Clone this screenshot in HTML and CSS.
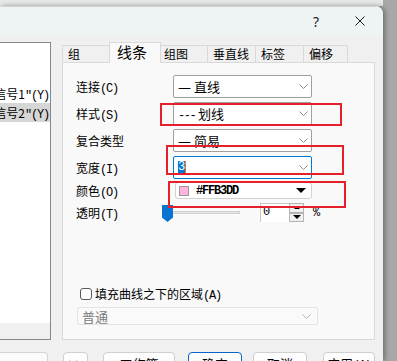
FILE: index.html
```html
<!DOCTYPE html>
<html lang="zh-CN">
<head>
<meta charset="utf-8">
<title>线条</title>
<link rel="stylesheet" href="styles.css">
</head>
<body>
<div class="dialog">
  <div class="titlebar">
    <span class="help">?</span>
    <svg class="close" width="10" height="10" viewBox="0 0 10 10"><path d="M0.5 0.5 L9.5 9.5 M9.5 0.5 L0.5 9.5" stroke="#1f1f1f" stroke-width="1" fill="none"/></svg>
  </div>
  <div class="content">
    <div class="main">
      <div class="list">
        <div class="items">
          <div class="item"><span>"信号1<span class="k">"(Y)</span></span></div>
          <div class="item sel"><span>"信号2<span class="k">"(Y)</span></span></div>
        </div>
        <div class="hscroll"></div>
      </div>
      <div class="tabs">
        <div class="tabstrip">
          <div class="tab t1">组</div>
          <div class="tab sel">线条</div>
          <div class="tab t3">组图</div>
          <div class="tab t4">垂直线</div>
          <div class="tab t5">标签</div>
          <div class="tab t6">偏移</div>
        </div>
        <div class="panel">
          <div class="row">
            <span class="label">连接<span class="k">(C)</span></span>
            <div class="combo"><span class="val"><span class="dash">—</span> 直线</span><svg class="chev" width="9" height="5" viewBox="0 0 9 5"><path d="M0.5 0.5 L4.5 4.5 L8.5 0.5" fill="none" stroke="#8c8c8c"/></svg></div>
          </div>
          <div class="row">
            <span class="label">样式<span class="k">(S)</span></span>
            <div class="combo"><span class="val"><span class="dashes">---</span> 划线</span><svg class="chev" width="9" height="5" viewBox="0 0 9 5"><path d="M0.5 0.5 L4.5 4.5 L8.5 0.5" fill="none" stroke="#8c8c8c"/></svg></div>
          </div>
          <div class="row">
            <span class="label">复合类型</span>
            <div class="combo"><span class="val"><span class="dash">—</span> 简易</span><svg class="chev" width="9" height="5" viewBox="0 0 9 5"><path d="M0.5 0.5 L4.5 4.5 L8.5 0.5" fill="none" stroke="#8c8c8c"/></svg></div>
          </div>
          <div class="row row-width">
            <span class="label">宽度<span class="k">(I)</span></span>
            <div class="combo focus"><span class="selected-text">3</span><span class="caret"></span><svg class="chev" width="9" height="5" viewBox="0 0 9 5"><path d="M0.5 0.5 L4.5 4.5 L8.5 0.5" fill="none" stroke="#8c8c8c"/></svg></div>
          </div>
          <div class="row row-color">
            <span class="label">颜色<span class="k">(O)</span></span>
            <div class="colorbox"><span class="swatch"></span><span class="hex">#FFB3DD</span><span class="tri"></span></div>
          </div>
          <div class="row row-slider">
            <span class="label label-short">透明<span class="k">(T)</span></span>
            <div class="slider"><span class="track"></span><span class="thumb"></span></div>
            <div class="spin-input">0</div>
            <div class="spin-btns"><span class="sb up"><span class="up-tri"></span></span><span class="sb down"><span class="down-tri"></span></span></div>
            <span class="pct">%</span>
          </div>
          <div class="check-row">
            <span class="checkbox"></span>
            <span class="check-label">填充曲线之下的区域<span class="k">(A)</span></span>
          </div>
          <div class="combo disabled"><span class="val">普通</span><svg class="chev" width="9" height="5" viewBox="0 0 9 5"><path d="M0.5 0.5 L4.5 4.5 L8.5 0.5" fill="none" stroke="#b5b5b5"/></svg></div>

          <div class="mark m1"></div>
          <div class="mark m2"></div>
          <div class="mark m3"></div>
        </div>
      </div>
    </div>
    <div class="buttons">
      <div class="leftbox"></div>
      <div class="btn b1">&gt;&gt;</div>
      <div class="btn b2">工作簿</div>
      <div class="btn b3 default">确定</div>
      <div class="btn b4">取消</div>
      <div class="btn b5">应用<span class="k">(A)</span></div>
    </div>
  </div>
</div>
</body>
</html>
```
FILE: styles.css
```css
html, body {
  margin: 0;
  padding: 0;
}
body {
  width: 397px;
  height: 361px;
  overflow: hidden;
  background:
    linear-gradient(to right, #e6e8e8 383px, transparent 383px) top left / 100% 6px no-repeat,
    #a8a8a8;
  font-family: "Noto Sans CJK SC", sans-serif;
  color: #000;
}
.dialog {
  width: 383px;
  height: 355px;
  margin-top: 6px;
  background: #f0f0f0;
  border-top-right-radius: 8px;
  box-shadow: 2px 0 5px rgba(0, 0, 0, 0.35);
  overflow: hidden;
}
.titlebar {
  height: 28px;
  border-top: 1px solid #cfd3d3;
  background: #eef4f3;
  display: flex;
  align-items: center;
  justify-content: flex-end;
}
.help {
  font-family: "Noto Sans", sans-serif;
  font-size: 14px;
  color: #222;
  margin-right: 36px;
}
.close {
  margin-right: 18px;
}
.content {
  padding-top: 7px;
}
.main {
  display: flex;
  height: 298px;
}
.k {
  font-family: "Liberation Mono", monospace;
  font-size: 12px;
  letter-spacing: -1.2px;
}
.list {
  width: 51px;
  box-sizing: border-box;
  background: #fff;
  border-top: 1px solid #828790;
  border-right: 1px solid #828790;
  border-bottom: 1px solid #828790;
  display: flex;
  flex-direction: column;
}
.items {
  padding-top: 41px;
}
.item {
  height: 19px;
  display: flex;
  justify-content: flex-end;
  align-items: center;
  white-space: nowrap;
  overflow: hidden;
  font-size: 12px;
  padding-right: 1px;
}
.item.sel {
  background: #d6d6d6;
}
.hscroll {
  margin-top: auto;
  height: 16px;
  background: #f0f0f0;
}
.tabs {
  margin-left: 11px;
  width: 313px;
  display: flex;
  flex-direction: column;
}
.tabstrip {
  height: 20px;
  display: flex;
  align-items: flex-end;
  position: relative;
  z-index: 1;
}
.tab {
  height: 17px;
  box-sizing: border-box;
  border-top: 1px solid #d9d9d9;
  border-left: 1px solid #d9d9d9;
  background: #f0f0f0;
  font-size: 12px;
  line-height: 15px;
  padding-left: 5px;
}
.t1 { width: 49px; }
.tab.sel {
  width: 52px;
  height: 21px;
  margin: 0 -2px -1px -2px;
  background: #f9f9f9;
  border-right: 1px solid #d9d9d9;
  font-size: 15px;
  line-height: 18px;
  padding-left: 7px;
  position: relative;
  z-index: 2;
}
.t3 { width: 48px; padding-left: 4px; }
.t4 { width: 48px; }
.t5 { width: 48px; }
.t6 { width: 45px; border-right: 1px solid #d9d9d9; }
.panel {
  flex: 1;
  border: 1px solid #d9d9d9;
  background: #f9f9f9;
  position: relative;
  padding: 12px 0 0 13px;
}
.row {
  display: flex;
  align-items: center;
  height: 23px;
  margin-bottom: 4px;
}
.row-width {
  margin-bottom: 3px;
}
.label {
  width: 97px;
  font-size: 12px;
  flex: none;
}
.label-short {
  width: 86px;
}
.combo {
  width: 139px;
  height: 23px;
  box-sizing: border-box;
  border: 1px solid #a0a0a0;
  border-radius: 2px;
  background: #fff;
  display: flex;
  align-items: center;
  padding: 0 3px 0 4px;
  font-size: 13px;
}
.combo .chev {
  margin-left: auto;
}
.dash {
  font-family: "DejaVu Sans", sans-serif;
  font-size: 13px;
}
.dashes {
  font-family: "Liberation Mono", monospace;
  font-size: 12px;
  letter-spacing: -1.5px;
}
.combo.focus {
  border-color: #0078d7;
}
.selected-text {
  font-family: "Liberation Mono", monospace;
  font-size: 12px;
  background: #0078d7;
  color: #fff;
  width: 7px;
  height: 13px;
  line-height: 13px;
  text-align: center;
}
.caret {
  width: 1px;
  height: 13px;
  background: #e07a1f;
}
.row-color {
  height: 17px;
  margin-bottom: 4px;
}
.colorbox {
  width: 137px;
  height: 17px;
  margin-left: 2px;
  box-sizing: border-box;
  border: 1px solid #d2d2d2;
  border-radius: 3px;
  background: #fff;
  display: flex;
  align-items: center;
  padding-left: 3px;
}
.swatch {
  width: 10px;
  height: 10px;
  box-sizing: border-box;
  border: 1px solid #9a9a9a;
  background: #ffb3dd;
}
.hex {
  margin-left: 7px;
  font-family: "Liberation Mono", monospace;
  font-size: 12px;
  letter-spacing: -1.2px;
  font-weight: bold;
}
.tri {
  margin-left: auto;
  margin-right: 5px;
  width: 0;
  height: 0;
  border-left: 5px solid transparent;
  border-right: 5px solid transparent;
  border-top: 5px solid #000;
}
.row-slider {
  height: 19px;
  margin-bottom: 0;
}
.slider {
  width: 78px;
  height: 19px;
  position: relative;
  flex: none;
}
.track {
  position: absolute;
  left: 5px;
  top: 8px;
  width: 73px;
  height: 3px;
  box-sizing: border-box;
  background: #e6e6e6;
  border: 1px solid #d0d0d0;
}
.thumb {
  position: absolute;
  left: 0;
  top: 2px;
  width: 11px;
  height: 17px;
  background: #0a72d0;
  clip-path: polygon(0 0, 100% 0, 100% 74%, 50% 100%, 0 74%);
}
.spin-input {
  margin-left: 20px;
  width: 29px;
  height: 19px;
  box-sizing: border-box;
  background: #fff;
  border-top: 1px solid #c8c8c8;
  border-left: 1px solid #c8c8c8;
  font-family: "Liberation Mono", monospace;
  font-size: 12px;
  line-height: 17px;
  padding-left: 2px;
}
.spin-btns {
  width: 15px;
  height: 19px;
  display: flex;
  flex-direction: column;
}
.sb {
  flex: 1;
  box-sizing: border-box;
  border: 1px solid #b4b4b4;
  background: #f0f0f0;
  display: flex;
  align-items: center;
  justify-content: center;
}
.up-tri {
  width: 0;
  height: 0;
  border-left: 3px solid transparent;
  border-right: 3px solid transparent;
  border-bottom: 3px solid #000;
}
.down-tri {
  width: 0;
  height: 0;
  border-left: 4px solid transparent;
  border-right: 4px solid transparent;
  border-top: 4px solid #000;
}
.pct {
  margin-left: 9px;
  font-family: "Liberation Mono", monospace;
  font-size: 12px;
}
.check-row {
  margin-top: 66px;
  height: 12px;
  display: flex;
  align-items: center;
}
.checkbox {
  width: 12px;
  height: 12px;
  margin-left: 4px;
  box-sizing: border-box;
  border: 1px solid #5a5a5a;
  border-radius: 3px;
  background: #fff;
}
.check-label {
  margin-left: 3px;
  font-size: 12px;
}
.combo.disabled {
  margin-top: 7px;
  margin-left: 1px;
  width: 241px;
  height: 18px;
  border-color: #e3e3e3;
  background: #fafafa;
  color: #7a7a7a;
  padding-right: 6px;
}
.mark {
  position: absolute;
  box-sizing: border-box;
  border: 2px solid #e5202b;
}
.m1 { left: 97px; top: 40px; width: 182px; height: 23px; }
.m2 { left: 103px; top: 82px; width: 178px; height: 30px; }
.m3 { left: 105px; top: 118px; width: 178px; height: 27px; }
.buttons {
  margin-top: 12px;
  display: flex;
  height: 24px;
}
.leftbox {
  width: 48px;
  box-sizing: border-box;
  border: 1px solid #d4d4d4;
  border-left: none;
  border-radius: 0 4px 0 0;
  background: #fbfbfb;
}
.btn {
  box-sizing: border-box;
  height: 24px;
  border: 1px solid #d0d0d0;
  border-radius: 4px;
  background: #fdfdfd;
  font-size: 13px;
  line-height: 22px;
  text-align: center;
}
.btn.default {
  border-color: #0a64c8;
}
.b1 { width: 25px; margin-left: 15px; font-family: "Liberation Mono", monospace; font-size: 11px; }
.b2 { width: 72px; margin-left: 15px; }
.b3 { width: 54px; margin-left: 13px; }
.b4 { width: 54px; margin-left: 11px; }
.b5 { width: 52px; margin-left: 16px; }
```
